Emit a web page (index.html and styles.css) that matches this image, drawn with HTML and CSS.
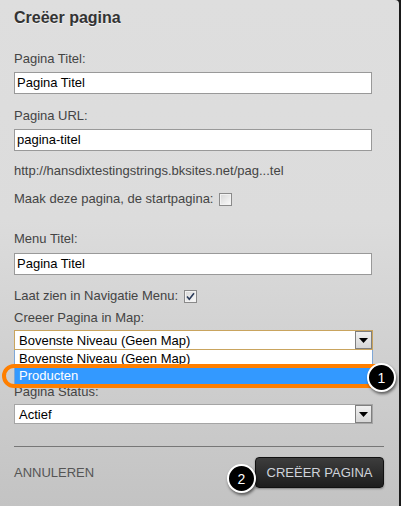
FILE: index.html
```html
<!DOCTYPE html>
<html>
<head>
<meta charset="utf-8">
<link rel="stylesheet" href="styles.css">
</head>
<body>
<div class="panel">
  <h1 class="title">Creëer pagina</h1>

  <div class="label l-first">Pagina Titel:</div>
  <div class="input">Pagina Titel</div>

  <div class="label l-gap">Pagina URL:</div>
  <div class="input">pagina-titel</div>

  <div class="text t-url">http://hansdixtestingstrings.bksites.net/pag...tel</div>
  <div class="text t-check">Maak deze pagina, de startpagina: <span class="cb"></span></div>

  <div class="label l-menu">Menu Titel:</div>
  <div class="input i-menu">Pagina Titel</div>

  <div class="text t-nav">Laat zien in Navigatie Menu: <span class="cb checked"><svg viewBox="0 0 13 13" width="13" height="13"><path d="M3 6.5 L5.3 9.2 L10 3.2" fill="none" stroke="#2a3b5a" stroke-width="1.6"/></svg></span></div>
  <div class="label l-map">Creeer Pagina in Map:</div>
  <div class="select focused">
    <span>Bovenste Niveau (Geen Map)</span>
    <span class="arrow"><svg viewBox="0 0 9 5" width="9" height="5"><path d="M0 0 H9 L4.5 5 Z" fill="#000"/></svg></span>
  </div>

  <div class="label l-status">Pagina Status:</div>
  <div class="select">
    <span>Actief</span>
    <span class="arrow"><svg viewBox="0 0 9 5" width="9" height="5"><path d="M0 0 H9 L4.5 5 Z" fill="#000"/></svg></span>
  </div>

  <hr class="rule">

  <div class="footer">
    <span class="cancel">ANNULEREN</span>
    <span class="btn">CREËER PAGINA</span>
  </div>

  <div class="dropdown">
    <div class="opt">Bovenste Niveau (Geen Map)</div>
    <div class="opt sel">Producten</div>
  </div>
  <div class="ring"></div>
  <div class="badge b1">1</div>
  <div class="badge b2">2</div>
</div>
</body>
</html>
```

FILE: styles.css
```css
html, body {
  margin: 0;
  padding: 0;
  background: #1a1a1a;
}
body {
  width: 401px;
  height: 506px;
  overflow: hidden;
  font-family: "Liberation Sans", Arial, sans-serif;
  font-size: 13px;
  color: #444;
}
.panel {
  position: relative;
  box-sizing: border-box;
  width: 399px;
  height: 506px;
  padding: 0 15px 0 14px;
  background: linear-gradient(#dedede 0, #dcdcdc 220px, #c3c3c3 100%);
  border-top-right-radius: 4px;
}
.title {
  margin: 0;
  padding-top: 8px;
  font-size: 16px;
  line-height: 20px;
  font-weight: bold;
  color: #333;
  text-shadow: 0 1px 0 #f4f4f4;
}
.label, .text {
  line-height: 16px;
  height: 16px;
  white-space: nowrap;
}
.l-first { margin-top: 23px; }
.l-gap { margin-top: 14px; }
.input {
  box-sizing: border-box;
  width: 358px;
  height: 22px;
  margin-top: 5px;
  border: 1px solid #999;
  background: #fff;
  color: #000;
  line-height: 20px;
  padding-left: 2px;
}
.t-url { margin-top: 12px; }
.t-check { margin-top: 12px; display: flex; align-items: center; }
.l-menu { margin-top: 24px; }
.i-menu { margin-top: 6px; }
.t-nav { margin-top: 13px; display: flex; align-items: center; }
.l-map { margin-top: 6px; }
.cb {
  display: inline-block;
  box-sizing: border-box;
  width: 13px;
  height: 13px;
  margin-left: 6px;
  border: 1px solid #8a8a8a;
  background: linear-gradient(135deg, #d6d6d6, #fbfbfb);
  box-shadow: inset 0 0 0 1px #f2f2f2;
  position: relative;
}
.cb svg {
  position: absolute;
  left: -1px;
  top: -1px;
}
.select {
  box-sizing: border-box;
  width: 359px;
  height: 20px;
  margin-top: 4px;
  border: 1px solid #a5a5a5;
  background: #fff;
  color: #000;
  display: flex;
  align-items: center;
  justify-content: space-between;
  padding-left: 4px;
}
.select.focused {
  border-color: #c9a45e;
}
.arrow {
  box-sizing: border-box;
  width: 17px;
  height: 18px;
  border: 1px solid #7f7f7f;
  background: linear-gradient(#f0f0f0, #d6d6d6);
  display: flex;
  align-items: center;
  justify-content: center;
}
.l-status { margin-top: 34px; }
.rule {
  margin: 22px 0 0;
  border: 0;
  height: 1px;
  background: #777;
}
.footer {
  margin-top: 10px;
  display: flex;
  justify-content: space-between;
  align-items: center;
}
.cancel {
  color: #555;
  font-size: 13px;
}
.btn {
  box-sizing: border-box;
  width: 129px;
  height: 31px;
  border-radius: 4px;
  border: 1px solid #111;
  background: linear-gradient(#3d3d3d, #1d1d1d);
  color: #cfd3da;
  display: flex;
  align-items: center;
  justify-content: center;
  box-shadow: 0 1px 2px rgba(0,0,0,0.35);
}
.dropdown {
  position: absolute;
  left: 14px;
  top: 350px;
  box-sizing: border-box;
  width: 359px;
  height: 36px;
  border: 1px solid #7fa7d6;
  border-top: 0;
  background: #fff;
  color: #000;
}
.opt {
  height: 17px;
  line-height: 17px;
  padding-left: 4px;
}
.opt.sel {
  background: #3399ff;
  color: #fff;
}
.ring {
  position: absolute;
  left: 2px;
  top: 364px;
  box-sizing: border-box;
  width: 384px;
  height: 24px;
  border: 4px solid #ff7f00;
  border-radius: 12px;
}
.badge {
  position: absolute;
  box-sizing: border-box;
  width: 29px;
  height: 29px;
  border-radius: 50%;
  background: #000;
  border: 2px solid #fff;
  color: #fff;
  font-size: 14px;
  display: flex;
  align-items: center;
  justify-content: center;
  box-shadow: 1px 2px 3px rgba(0,0,0,0.55);
}
.b1 { left: 367px; top: 363px; }
.b2 { left: 227px; top: 464px; }
```
